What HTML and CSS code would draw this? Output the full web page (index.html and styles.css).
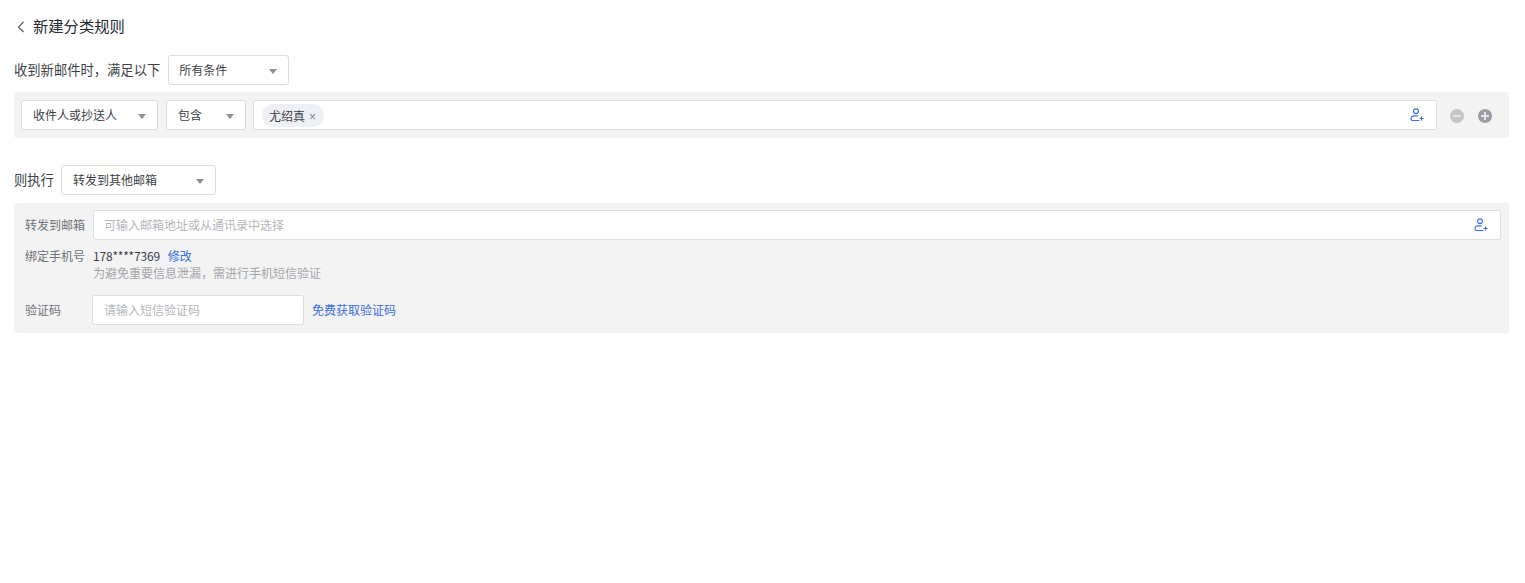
FILE: index.html
```html
<!DOCTYPE html>
<html>
<head>
    <title>新建分类规则</title>
    <meta charset="utf-8">
    <link rel="stylesheet" href="styles.css">
</head>
<body>
    <div class="page">
        <div class="title-bar">
            <svg class="back-icon" width="8" height="12" viewBox="0 0 8 12"><path d="M6.5 1 1.5 6l5 5" fill="none" stroke="#555" stroke-width="1.1"/></svg>
            <span class="title">新建分类规则</span>
        </div>

        <div class="line line-cond">
            <span class="label">收到新邮件时，满足以下</span>
            <div class="select select-all"><span>所有条件</span><i class="arrow"></i></div>
        </div>

        <div class="panel panel-cond">
            <div class="select select-who"><span>收件人或抄送人</span><i class="arrow"></i></div>
            <div class="select select-has"><span>包含</span><i class="arrow"></i></div>
            <div class="input input-tags">
                <span class="tag"><span>尤绍真</span><span class="tag-x">×</span></span>
                <svg class="contact-icon" width="14" height="14" viewBox="0 0 14 14"><g fill="none" stroke="#3f74e8" stroke-width="1.2"><circle cx="6" cy="3.2" r="2.4"/><path d="M9.5 12.5H2.4q-1.4 0-1.4-1.4Q1 7.8 4.2 7.8h3.6"/></g><path d="M9.6 10.5h4M11.6 8.5v4" stroke="#3f74e8" stroke-width="1.2"/></svg>
            </div>
            <div class="round-btns">
                <span class="round round-minus"><i class="bar"></i></span>
                <span class="round round-plus"><i class="bar"></i><i class="bar bar-v"></i></span>
            </div>
        </div>

        <div class="line line-do">
            <span class="label label-do">则执行</span>
            <div class="select select-do"><span>转发到其他邮箱</span><i class="arrow"></i></div>
        </div>

        <div class="panel panel-do">
            <div class="form-row row-mail">
                <span class="row-label">转发到邮箱</span>
                <div class="input input-mail">
                    <span class="placeholder">可输入邮箱地址或从通讯录中选择</span>
                    <svg class="contact-icon" width="14" height="14" viewBox="0 0 14 14"><g fill="none" stroke="#3f74e8" stroke-width="1.2"><circle cx="6" cy="3.2" r="2.4"/><path d="M9.5 12.5H2.4q-1.4 0-1.4-1.4Q1 7.8 4.2 7.8h3.6"/></g><path d="M9.6 10.5h4M11.6 8.5v4" stroke="#3f74e8" stroke-width="1.2"/></svg>
                </div>
            </div>
            <div class="form-row row-phone">
                <span class="row-label row-label-phone">绑定手机号</span>
                <div class="phone-info">
                    <div><span class="phone">178****7369</span><a class="link link-edit">修改</a></div>
                    <div class="hint">为避免重要信息泄漏，需进行手机短信验证</div>
                </div>
            </div>
            <div class="form-row row-code">
                <span class="row-label row-label-code">验证码</span>
                <div class="input input-code"><span class="placeholder">请输入短信验证码</span></div>
                <a class="link link-code">免费获取验证码</a>
            </div>
        </div>
    </div>
</body>
</html>
```

FILE: styles.css
```css
body {
    margin: 0;
    background: #fff;
    font-family: "Noto Sans CJK SC", "Noto Sans", sans-serif;
    font-size: 12px;
    color: #3c3f47;
}
.page {
    padding: 0 16px 0 14px;
}
.title-bar {
    display: flex;
    align-items: center;
    height: 55px;
    padding: 0 0 1px 3px;
    box-sizing: border-box;
}
.back-icon {
    margin-right: 8px;
}
.title {
    font-size: 15.3px;
    color: #262a33;
    padding-bottom: 5px;
}
.line {
    display: flex;
    align-items: center;
    height: 30px;
}
.label {
    font-size: 13.3px;
    color: #3c3f47;
    margin-right: 8px;
    padding-bottom: 2px;
}
.label-do {
    margin-right: 7px;
}
.select {
    display: flex;
    align-items: center;
    justify-content: space-between;
    box-sizing: border-box;
    height: 30px;
    background: #fff;
    border: 1px solid #dcdde0;
    border-radius: 3px;
    color: #3c3f47;
}
.select span {
    padding-bottom: 2px;
}
.arrow {
    width: 0;
    height: 0;
    margin-top: 3px;
    border-left: 4px solid transparent;
    border-right: 4px solid transparent;
    border-top: 5px solid #8d9096;
}
.select-all {
    width: 121px;
    padding: 0 11px 0 10px;
}
.panel {
    background: #f3f3f3;
    border-radius: 3px;
}
.panel-cond {
    display: flex;
    align-items: center;
    margin-top: 7px;
    height: 46px;
    padding: 0 7px;
}
.select-who {
    width: 137px;
    padding: 0 11px;
    margin-right: 8px;
}
.select-has {
    width: 80px;
    padding: 0 11px;
    margin-right: 7px;
}
.input {
    display: flex;
    align-items: center;
    box-sizing: border-box;
    height: 30px;
    background: #fff;
    border: 1px solid #dcdde0;
    border-radius: 3px;
}
.input-tags {
    flex: 1;
    padding: 0 12px 0 8px;
    justify-content: space-between;
}
.tag {
    display: flex;
    align-items: center;
    height: 23px;
    padding: 0 8px 0 7px;
    background: #eff0f5;
    border-radius: 12px;
    color: #3c3f47;
}
.tag-x {
    margin: 3px 0 0 4px;
    color: #85878d;
    font-family: "Liberation Sans", sans-serif;
}
.round-btns {
    display: flex;
    gap: 14px;
    margin: 2px 10px 0 13px;
}
.round {
    position: relative;
    display: block;
    width: 14px;
    height: 14px;
    border-radius: 50%;
}
.round-minus {
    background: #c6c6c8;
}
.round-plus {
    background: #9c9ca4;
}
.bar {
    position: absolute;
    left: 3px;
    top: 6.25px;
    width: 8px;
    height: 1.5px;
    background: #e4e4e6;
}
.bar-v {
    left: 6.25px;
    top: 3px;
    width: 1.5px;
    height: 8px;
}
.line-do {
    margin-top: 27px;
}
.select-do {
    width: 155px;
    padding: 0 11px;
}
.panel-do {
    margin-top: 8px;
    height: 130px;
    box-sizing: border-box;
    padding: 7px 8px 8px 11px;
}
.form-row {
    display: flex;
    color: #6f7278;
}
.row-label {
    width: 68px;
    flex: none;
    color: #6f7278;
    padding-bottom: 2px;
}
.row-label-phone {
    padding-bottom: 0;
}
.row-mail {
    align-items: center;
}
.input-mail {
    flex: 1;
    padding: 0 12px 0 10px;
    justify-content: space-between;
}
.placeholder {
    color: #b5b6ba;
    padding-bottom: 2px;
}
.row-phone {
    margin-top: 7px;
    line-height: 18px;
}
.phone {
    color: #3c3f47;
    margin-right: 8px;
    letter-spacing: -0.2px;
}
.hint {
    color: #a4a6ab;
    margin-top: -1px;
}
.link {
    color: #386ee7;
}
.row-code {
    align-items: center;
    margin-top: 13px;
}
.row-label-code {
    width: 67px;
}
.input-code {
    width: 212px;
    padding: 0 11px;
}
.link-code {
    margin-left: 8px;
    padding-bottom: 2px;
}
```
